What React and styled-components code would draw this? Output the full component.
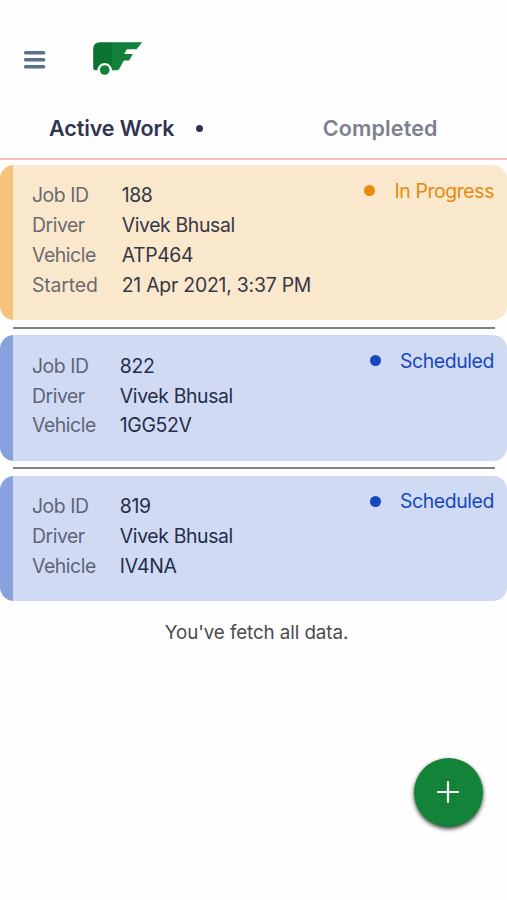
// src/App.jsx

import React, { useState } from 'react';
import styled, { createGlobalStyle } from 'styled-components';

const GlobalStyle = createGlobalStyle`
  * {
    box-sizing: border-box;
  }

  body {
    margin: 0;
    background: #fefefe;
    font-family: Inter, 'Liberation Sans', sans-serif;
    color: #2f3349;
  }
`;

const tones = {
  progress: { bar: '#f4c27c', fill: '#fae8cd', text: '#e68a0c', value: '#353745', label: '#6c6a70' },
  scheduled: { bar: '#88a2de', fill: '#d0daf3', text: '#1648c0', value: '#252d4c', label: '#5d6579' },
};

const Screen = styled.div`
  display: flex;
  flex-direction: column;
  height: 900px;
  overflow: hidden;
`;

const Header = styled.header`
  display: flex;
  align-items: center;
  height: 98px;
  padding: 20px 24px 0;
`;

const MenuButton = styled.button`
  display: flex;
  margin: 2px 47px 0 0;
  padding: 0;
  border: none;
  background: transparent;
  cursor: pointer;
`;

const Tabs = styled.nav`
  display: grid;
  grid-template-columns: 1fr 1fr;
  height: 62px;
  border-bottom: 2px solid #f6bfbe;
`;

const Tab = styled.button`
  display: flex;
  align-items: center;
  justify-content: center;
  gap: 21px;
  padding: 0 ${({ $active }) => ($active ? '2px' : '0')} 0 0;
  border: none;
  background: transparent;
  font: 600 21.5px/26px Inter, 'Liberation Sans', sans-serif;
  letter-spacing: ${({ $active }) => ($active ? '-0.08px' : '0.15px')};
  color: ${({ $active }) => ($active ? '#303450' : '#7d808d')};
  cursor: pointer;
`;

const Dot = styled.span`
  flex: none;
  width: ${({ $size }) => $size}px;
  height: ${({ $size }) => $size}px;
  border-radius: 50%;
  background: currentColor;
`;

const List = styled.main`
  padding-top: 5px;
`;

const Card = styled.article`
  display: flex;
  justify-content: space-between;
  padding: 15.6px 13px 20.8px 32px;
  border-radius: 14px;
  background: linear-gradient(
    to right,
    ${({ $tone }) => $tone.bar} 13.3px,
    ${({ $tone }) => $tone.fill} 13.3px
  );
`;

const Divider = styled.hr`
  height: 2px;
  margin: 6.5px 12.5px 6.4px 13.3px;
  border: none;
  background: #818181;
`;

const Details = styled.dl`
  display: grid;
  grid-template-columns: auto auto;
  grid-auto-rows: 29.75px;
  column-gap: 24px;
  align-items: center;
  margin: 0;
  font-size: 19.4px;
`;

const Label = styled.dt`
  letter-spacing: ${({ $loose }) => ($loose ? '-0.15px' : '-0.45px')};
  color: ${({ $tone }) => $tone.label};
`;

const Value = styled.dd`
  margin: 0;
  letter-spacing: ${({ $loose }) => ($loose ? '-0.22px' : '-0.36px')};
  color: ${({ $tone }) => $tone.value};
`;

const Status = styled.div`
  display: flex;
  align-items: center;
  gap: 19px;
  height: 20px;
  font-size: 19.4px;
  letter-spacing: -0.38px;
  color: ${({ $tone }) => $tone.text};
`;

const Footnote = styled.p`
  margin: 19px 0 0;
  padding-left: 6px;
  font-size: 18.8px;
  letter-spacing: -0.08px;
  line-height: 25px;
  text-align: center;
  color: #4b4b4b;
`;

const AddButton = styled.button`
  position: absolute;
  top: 758px;
  left: 414px;
  display: flex;
  align-items: center;
  justify-content: center;
  width: 69px;
  height: 69px;
  padding: 0 1px 1px 0;
  border: none;
  border-radius: 50%;
  background: #13833a;
  box-shadow: 0 2px 4px rgba(0, 0, 0, 0.75);
  cursor: pointer;
`;

const jobs = [
  {
    tone: tones.progress,
    status: 'In Progress',
    fields: [
      ['Job ID', '188'],
      ['Driver', 'Vivek Bhusal'],
      ['Vehicle', 'ATP464'],
      ['Started', '21 Apr 2021, 3:37 PM'],
    ],
  },
  {
    tone: tones.scheduled,
    status: 'Scheduled',
    fields: [
      ['Job ID', '822'],
      ['Driver', 'Vivek Bhusal'],
      ['Vehicle', '1GG52V'],
    ],
  },
  {
    tone: tones.scheduled,
    status: 'Scheduled',
    fields: [
      ['Job ID', '819'],
      ['Driver', 'Vivek Bhusal'],
      ['Vehicle', 'IV4NA'],
    ],
  },
];

const MenuIcon = () => (
  <svg width="22" height="20" viewBox="0 0 22 20" fill="#5b718a">
    <rect x="0" y="1" width="21.3" height="3.6" rx="1.5" />
    <rect x="0" y="8" width="21.3" height="3.6" rx="1.5" />
    <rect x="0" y="15" width="21.3" height="3.6" rx="1.5" />
  </svg>
);

const Logo = () => (
  <svg width="50" height="34" viewBox="0 0 50 34" fill="#118039">
    <defs>
      <linearGradient id="van" gradientUnits="userSpaceOnUse" x1="0" y1="0" x2="50" y2="0">
        <stop offset="0.38" stopColor="#0c7433" />
        <stop offset="0.38" stopColor="#118039" />
      </linearGradient>
    </defs>
    <path
      d="M7 .2H49.3L43.4 7.2H33.8L31.2 12H39.8L36 18.6H30.8L26.3 26.8Q25.3 28.3 23.6 28.3H19A7.3 7.3 0 0 0 4.4 28.3H2.5Q.2 28.3.2 26V7Q.2.2 7 .2Z"
      fill="url(#van)"
    />
    <circle cx="11.7" cy="28" r="4.8" />
  </svg>
);

const JobCard = ({ job }) => (
  <Card $tone={job.tone}>
    <Details>
      {job.fields.map(([label, value]) => (
        <React.Fragment key={label}>
          <Label $tone={job.tone} $loose={label === 'Started'}>
            {label}
          </Label>
          <Value $tone={job.tone} $loose={label === 'Started'}>
            {value}
          </Value>
        </React.Fragment>
      ))}
    </Details>
    <Status $tone={job.tone}>
      <Dot $size={11} />
      {job.status}
    </Status>
  </Card>
);

const App = () => {
  const [tab, setTab] = useState('active');

  return (
    <Screen>
      <GlobalStyle />
      <Header>
        <MenuButton aria-label="Menu">
          <MenuIcon />
        </MenuButton>
        <Logo />
      </Header>
      <Tabs>
        <Tab $active={tab === 'active'} onClick={() => setTab('active')}>
          Active Work
          {tab === 'active' && <Dot $size={7} />}
        </Tab>
        <Tab $active={tab === 'completed'} onClick={() => setTab('completed')}>
          Completed
          {tab === 'completed' && <Dot $size={7} />}
        </Tab>
      </Tabs>
      <List>
        {jobs.map((job, index) => (
          <React.Fragment key={index}>
            {index > 0 && <Divider />}
            <JobCard job={job} />
          </React.Fragment>
        ))}
      </List>
      <Footnote>You've fetch all data.</Footnote>
      <AddButton aria-label="Add job">
        <svg width="24" height="24" viewBox="0 0 24 24" stroke="#fff" strokeWidth="2.2" strokeLinecap="round">
          <path d="M12 2v20M2 12h20" />
        </svg>
      </AddButton>
    </Screen>
  );
};

export default App;
